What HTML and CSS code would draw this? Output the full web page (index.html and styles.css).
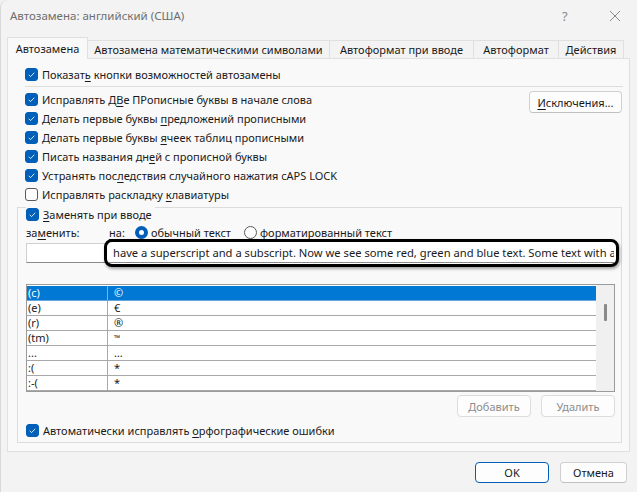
FILE: index.html
```html
<!DOCTYPE html>
<html lang="ru">
<head>
<meta charset="utf-8">
<title>Автозамена</title>
<link rel="stylesheet" href="styles.css">
</head>
<body>
<div class="window">
  <div class="titlebar">
    <span class="title">Автозамена: английский (США)</span>
    <span class="tb-help">?</span>
    <svg class="tb-close" width="12" height="12" viewBox="0 0 12 12"><path d="M1 1 L11 11 M11 1 L1 11" stroke="#8a8a8a" stroke-width="1" fill="none"/></svg>
  </div>
  <div class="tabs">
    <div class="tab tab-active t1">Автозамена</div>
    <div class="tab t2">Автозамена математическими символами</div>
    <div class="tab t3">Автоформат при вводе</div>
    <div class="tab t4">Автоформат</div>
    <div class="tab t5">Действия</div>
  </div>
  <div class="panel">
    <div class="row first-row">
      <span class="cb on"><svg viewBox="0 0 13 13"><path d="M3.2 6.8 L5.4 9 L9.8 4.4" stroke="#fff" stroke-width="1" fill="none"/></svg></span>
      <span>Показат<u>ь</u> кнопки возможностей автозамены</span>
    </div>
    <div class="sep"></div>
    <div class="section">
      <div class="rows">
        <div class="row"><span class="cb on"><svg viewBox="0 0 13 13"><path d="M3.2 6.8 L5.4 9 L9.8 4.4" stroke="#fff" stroke-width="1" fill="none"/></svg></span><span>Исправлять Д<u>В</u>е ПРописные буквы в начале слова</span></div>
        <div class="row"><span class="cb on"><svg viewBox="0 0 13 13"><path d="M3.2 6.8 L5.4 9 L9.8 4.4" stroke="#fff" stroke-width="1" fill="none"/></svg></span><span>Делать первые буквы <u>п</u>редложений прописными</span></div>
        <div class="row"><span class="cb on"><svg viewBox="0 0 13 13"><path d="M3.2 6.8 L5.4 9 L9.8 4.4" stroke="#fff" stroke-width="1" fill="none"/></svg></span><span>Делать первые буквы <u>я</u>чеек таблиц прописными</span></div>
        <div class="row"><span class="cb on"><svg viewBox="0 0 13 13"><path d="M3.2 6.8 L5.4 9 L9.8 4.4" stroke="#fff" stroke-width="1" fill="none"/></svg></span><span>Писать названия дн<u>е</u>й с прописной буквы</span></div>
        <div class="row"><span class="cb on"><svg viewBox="0 0 13 13"><path d="M3.2 6.8 L5.4 9 L9.8 4.4" stroke="#fff" stroke-width="1" fill="none"/></svg></span><span>Устранять пос<u>л</u>едствия случайного нажатия cAPS LOCK</span></div>
        <div class="row"><span class="cb"></span><span>Исправлять раскладку <u>к</u>лавиатуры</span></div>
      </div>
      <div class="btn btn-exc"><u>И</u>сключения...</div>
    </div>
    <div class="group">
      <div class="legend">
        <span class="cb on"><svg viewBox="0 0 13 13"><path d="M3.2 6.8 L5.4 9 L9.8 4.4" stroke="#fff" stroke-width="1" fill="none"/></svg></span>
        <span><u>З</u>аменять при вводе</span>
      </div>
      <div class="labels">
        <span class="lbl-replace">за<u>м</u>енить:</span>
        <span class="lbl-with"><u>н</u>а:</span>
        <span class="radio on"></span>
        <span class="radio-text">обычный текст</span>
        <span class="radio"></span>
        <span>форматированный текст</span>
      </div>
      <div class="inputs">
        <div class="input-left"></div>
        <div class="highlight">
          <div class="input-right">have a superscript and a subscript. Now we see some red, green and blue text. Some text with a yellow highlight.</div>
        </div>
      </div>
      <div class="list">
        <div class="list-rows">
          <div class="lrow sel"><span class="c1">(c)</span><span class="c2">©</span></div>
          <div class="lrow"><span class="c1">(e)</span><span class="c2">€</span></div>
          <div class="lrow"><span class="c1">(r)</span><span class="c2">®</span></div>
          <div class="lrow"><span class="c1">(tm)</span><span class="c2 tm">™</span></div>
          <div class="lrow"><span class="c1">...</span><span class="c2">…</span></div>
          <div class="lrow"><span class="c1">:(</span><span class="c2">*</span></div>
          <div class="lrow"><span class="c1">:-(</span><span class="c2">*</span></div>
        </div>
        <div class="scroll"><div class="thumb"></div></div>
      </div>
      <div class="list-btns">
        <div class="btn btn-dis">Добавить</div>
        <div class="btn btn-dis">Удалить</div>
      </div>
      <div class="row auto-row">
        <span class="cb on"><svg viewBox="0 0 13 13"><path d="M3.2 6.8 L5.4 9 L9.8 4.4" stroke="#fff" stroke-width="1" fill="none"/></svg></span>
        <span>Автоматически исправлять <u>о</u>рфографические ошибки</span>
      </div>
    </div>
  </div>
  <div class="footer">
    <div class="btn btn-ok">OK</div>
    <div class="btn btn-cancel">Отмена</div>
  </div>
</div>
</body>
</html>
```
FILE: styles.css
```css
* { box-sizing: border-box; }
html, body { margin: 0; padding: 0; }
body {
  width: 637px;
  height: 492px;
  overflow: hidden;
  background: #f0f0f0;
  font-family: "Noto Sans", "Open Sans", sans-serif;
  font-size: 11px;
  color: #1a1a1a;
}
u { text-decoration: underline; text-underline-offset: 2px; }
.window {
  width: 637px;
  height: 492px;
  background: #f3f3f3;
  border-top-left-radius: 8px;
  border-left: 1px solid #d8d8d8;
}
.titlebar {
  height: 37px;
  display: flex;
  align-items: center;
  padding-left: 9px;
  padding-bottom: 6px;
}
.title { color: #6e6e6e; flex: 1; font-size: 11.5px; }
.tb-help { color: #8a8a8a; width: 14px; margin-right: 33px; font-size: 13px; }
.tb-close { margin-right: 16px; }
.tabs {
  display: flex;
  align-items: flex-end;
  height: 21px;
  margin-left: 6px;
}
.tab {
  height: 18px;
  border: 1px solid #e0e0e0;
  border-bottom: none;
  border-left: none;
  display: flex;
  align-items: center;
  justify-content: center;
  background: #f3f3f3;
  white-space: nowrap;
  padding-bottom: 1px;
}
.tab-active {
  height: 22px;
  background: #f9f9f9;
  border-left: 1px solid #e0e0e0;
  margin-bottom: -1px;
  position: relative;
  z-index: 2;
}
.t1 { width: 81px; }
.t2 { width: 242px; }
.t3 { width: 144px; }
.t4 { width: 85px; }
.t5 { width: 65px; }
.panel {
  margin-left: 6px;
  width: 623px;
  height: 394px;
  background: #f9f9f9;
  border: 1px solid #e0e0e0;
  padding: 6px 0 0 17px;
  position: relative;
  z-index: 1;
}
.row {
  display: flex;
  align-items: center;
  height: 19px;
  white-space: nowrap;
}
.cb {
  width: 13px;
  height: 13px;
  border-radius: 3px;
  border: 1px solid #5a5a5a;
  background: #fdfdfd;
  margin-right: 4px;
  flex: none;
  display: flex;
}
.cb.on { background: #005fb8; border-color: #005fb8; }
.cb svg { width: 11px; height: 11px; }
.sep {
  height: 1px;
  background: #dedede;
  margin: 2px 0 3px 0;
  width: 598px;
}
.section {
  display: flex;
  justify-content: space-between;
  width: 597px;
}
.btn {
  display: flex;
  align-items: center;
  justify-content: center;
  background: #fdfdfd;
  border: 1px solid #d0d0d0;
  border-bottom-color: #c0c0c0;
  border-radius: 4px;
  white-space: nowrap;
}
.btn-exc {
  width: 93px;
  height: 22px;
  margin-top: 1px;
}
.group {
  margin: 3px 0 0 -8px;
  width: 605px;
  height: 236px;
  border: 1px solid #dcdcdc;
  padding-left: 8px;
}
.legend {
  display: inline-flex;
  align-items: center;
  height: 19px;
  margin-top: -10px;
  background: #f9f9f9;
  padding-right: 3px;
  white-space: nowrap;
}
.labels {
  display: flex;
  align-items: center;
  height: 17px;
  white-space: nowrap;
}
.lbl-replace { width: 83px; }
.lbl-with { width: 26px; }
.radio {
  width: 13px;
  height: 13px;
  border-radius: 50%;
  border: 1px solid #5a5a5a;
  background: #fdfdfd;
  margin-right: 3px;
  flex: none;
}
.radio.on {
  border: 4px solid #005fb8;
  background: #fff;
}
.radio-text { width: 93px; }
.inputs {
  display: flex;
  align-items: center;
  height: 28px;
  margin-top: -2px;
}
.input-left {
  width: 80px;
  height: 20px;
  background: #fff;
  border: 1px solid #d0d0d0;
  border-bottom-color: #8a8a8a;
  flex: none;
}
.highlight {
  margin-left: -2px;
  width: 515px;
  height: 28px;
  border: 3px solid #000;
  border-radius: 8px;
  background: #fff;
  box-shadow: 1px 2px 3px rgba(0,0,0,0.35);
  padding: 1px 2px;
  overflow: hidden;
}
.input-right {
  height: 20px;
  border-bottom: 1px solid #8a8a8a;
  padding-left: 4px;
  display: flex;
  align-items: center;
  white-space: nowrap;
  overflow: hidden;
  font-size: 11.2px;
}
.list {
  margin-top: 17px;
  width: 589px;
  height: 108px;
  border: 1px solid #9a9a9a;
  background: #fff;
  display: flex;
  padding-top: 1px;
}
.list-rows {
  width: 569px;
  font-size: 11px;
}
.lrow {
  display: flex;
  height: 15px;
  border-bottom: 1px solid #a8a8a8;
  line-height: 14px;
}
.lrow.sel { background: #0078d4; color: #fff; border-bottom-color: #6aa6da; }
.c1 {
  width: 81px;
  padding-left: 1px;
  border-right: 1px solid #a8a8a8;
}
.c2 { padding-left: 6px; }
.tm { font-size: 8px; }
.scroll {
  flex: 1;
  background: #f0f0f0;
  margin-top: -1px;
}
.thumb {
  margin: 19px 0 0 8px;
  width: 3px;
  height: 17px;
  background: #8a8a8a;
  border-radius: 1px;
}
.list-btns {
  display: flex;
  justify-content: flex-end;
  gap: 10px;
  width: 589px;
  margin-top: 3px;
}
.btn-dis {
  width: 74px;
  height: 22px;
  color: #8c8c8c;
  border-color: #dcdcdc;
}
.auto-row { margin-top: 4px; }
.footer {
  display: flex;
  justify-content: flex-end;
  gap: 11px;
  padding: 10px 10px 0 0;
}
.btn-ok {
  width: 74px;
  height: 21px;
  border: 1px solid #005fb8;
}
.btn-cancel {
  width: 67px;
  height: 21px;
}
```
